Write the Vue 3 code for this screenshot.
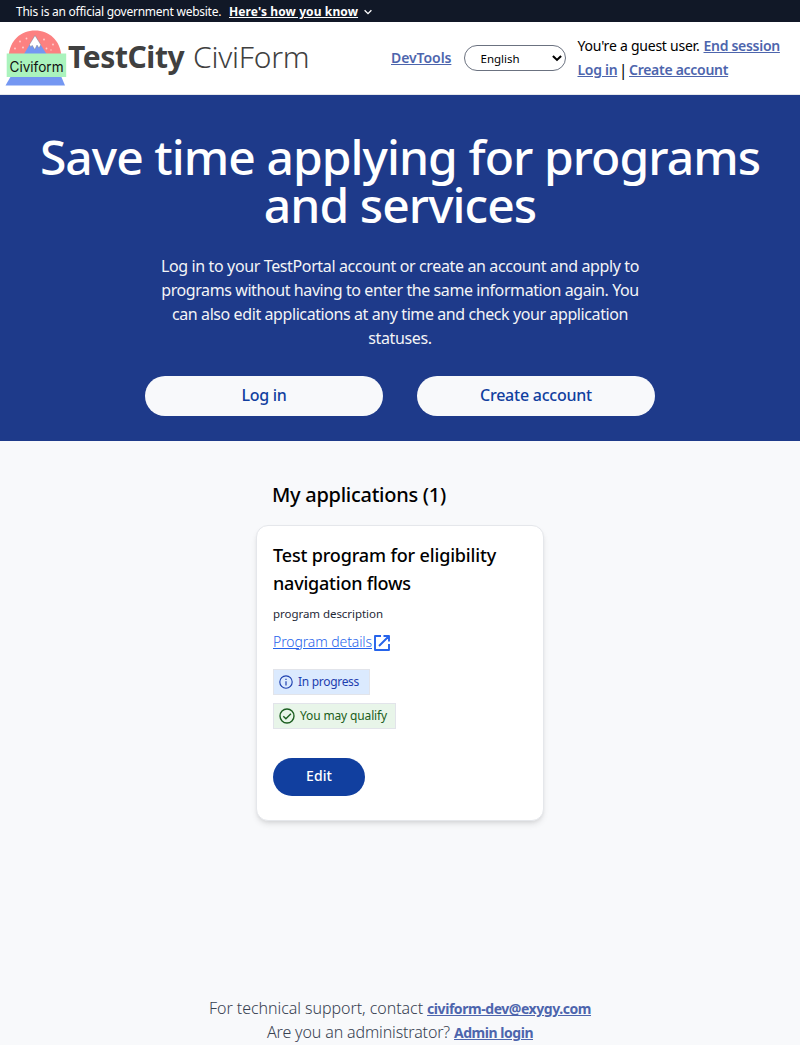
<script setup>
const introLines = [
  { text: 'Log in to your TestPortal account or create an account and apply to', cls: 'l1' },
  { text: 'programs without having to enter the same information again. You', cls: 'l2' },
  { text: 'can also edit applications at any time and check your application', cls: 'l3' },
  { text: 'statuses.', cls: 'l4' }
]
</script>

<template>
  <div class="page">
    <div class="banner">
      <span class="official">This is an official government website.</span>
      <a class="how">Here's how you know</a>
      <svg class="chev" viewBox="0 0 10 10" width="10" height="10"><path d="M1.6 3.2 5 6.6 8.4 3.2" fill="none" stroke="#fff" stroke-width="1.3" /></svg>
    </div>

    <header class="header">
      <div class="brand">
        <svg class="logo" viewBox="0 0 62 56" width="62" height="56">
          <path d="M2.500 27C3.500 10 15 .5 29 .5s25.500 9.500 26.500 26.500z" fill="#fc8181" />
          <path d="M18 24 29 5.500 40.500 24z" fill="#7497f2" />
          <path d="M23.500 14.500 29 5.500l5.800 9.300-1.800 3.200-2-3-2.200 4.500-2.600-4.200-1.600 1.700z" fill="#fff" stroke="#777" stroke-width=".4" />
          <g fill="#fed0d0">
            <circle cx="14" cy="11.500" r=".9" /><circle cx="20.500" cy="8.500" r=".9" /><circle cx="9" cy="18.500" r=".9" />
            <circle cx="17" cy="17.500" r=".9" /><circle cx="38" cy="9.500" r=".9" /><circle cx="47" cy="14.500" r=".9" />
            <circle cx="40.500" cy="18.500" r=".9" /><circle cx="45" cy="20" r=".7" />
          </g>
          <path d="M5 46h50l4 9.500H-.5z" fill="#7497f2" />
          <rect x=".7" y="23.500" width="59.500" height="23.500" fill="#aaf3bd" />
          <text class="logo-text" x="3.500" y="41.500" textLength="54" lengthAdjust="spacingAndGlyphs">Civiform</text>
        </svg>
        <span class="city">TestCity</span>
        <span class="civi">CiviForm</span>
      </div>
      <a class="link devtools">DevTools</a>
      <div class="lang">
        <span>English</span>
        <svg viewBox="0 0 10 8" width="10" height="8"><path d="M.9 2 5 5.900 9.100 2" fill="none" stroke="#000" stroke-width="2.100" /></svg>
      </div>
      <div class="account">
        <div class="line"><span class="guest">You're a guest user.</span><a class="link end">End session</a></div>
        <div class="line"><a class="link login">Log in</a><span class="bar">|</span><a class="link create">Create account</a></div>
      </div>
    </header>

    <section class="hero">
      <h1>Save time applying for programs and services</h1>
      <p class="intro"><span v-for="l in introLines" :key="l.cls" :class="l.cls">{{ l.text }}</span></p>
      <div class="actions">
        <button class="b-login">Log in</button>
        <button class="b-create">Create account</button>
      </div>
    </section>

    <main class="main">
      <h2>My applications (1)</h2>
      <article class="card">
        <h3><span>Test program for eligibility</span><span class="h3-two">navigation flows</span></h3>
        <p class="desc">program description</p>
        <a class="details"><span>Program details</span>
          <svg viewBox="0 0 16 16" width="16" height="16"><path d="M7 1H1v14h14V9M9.500 1H15v5.500M15 1 5 11" fill="none" stroke="#2563eb" stroke-width="1.900" stroke-linejoin="round" /></svg>
        </a>
        <div class="tag progress">
          <svg viewBox="0 0 14 14" width="14" height="14"><circle cx="7" cy="7" r="6.200" fill="none" stroke="#1e40af" stroke-width="1.150" /><path d="M7 6.200v4.200M7 3.700V5" stroke="#1e40af" stroke-width="1.200" /></svg>
          <span>In progress</span>
        </div>
        <div class="tag qualify">
          <svg viewBox="0 0 16 16" width="16" height="16"><circle cx="8" cy="8" r="7" fill="none" stroke="#1b5e20" stroke-width="1.400" /><path d="m4.300 8.200 2.600 2.600 5-5" fill="none" stroke="#1b5e20" stroke-width="1.400" /></svg>
          <span>You may qualify</span>
        </div>
        <button class="edit">Edit</button>
      </article>
    </main>

    <footer class="footer">
      <div class="f-line"><span class="support">For technical support, contact</span><a class="link mail">civiform-dev@exygy.com</a></div>
      <div class="f-line"><span class="ask">Are you an administrator?</span><a class="link admin">Admin login</a></div>
    </footer>
  </div>
</template>

<style>
body { background: #f8f9fb; }
</style>

<style scoped>
.page { height: 1045px; overflow: hidden; display: flex; flex-direction: column; font-family: "Noto Sans", sans-serif; background: #f8f9fb; color: #000; white-space: nowrap; }
h1, h2, h3, p { margin: 0; font-weight: 500; }
button { font-family: inherit; border: 0; padding: 0; font-weight: 500; }

.banner { height: 22px; display: flex; align-items: center; padding: 0 16px; background: #111827; color: #fff; font-size: 12px; line-height: 20px; }
.official, .how { padding-top: 2px; }
.official { width: 213px; letter-spacing: -.25px; }
.how { width: 129px; font-weight: 700; letter-spacing: .11px; text-decoration: underline; }
.chev { margin: 2px 0 0 5px; }

.header { box-sizing: border-box; height: 73px; display: flex; align-items: center; background: #fff; border-bottom: 1px solid #e5e7eb; }
.brand { width: 385px; padding-left: 6px; display: flex; align-items: center; font-size: 30px; line-height: 38px; color: #404040; }
.logo { flex: none; overflow: visible; }
.logo-text { font: 14px Inter, sans-serif; fill: #111; }
.city, .civi { padding-bottom: 2px; }
.city { width: 125px; font-weight: 700; letter-spacing: -.42px; }
.civi { font-weight: 300; letter-spacing: -.24px; }
.link { color: #4d65ad; font-size: 14px; font-weight: 600; text-decoration: underline; }
.devtools { width: 73px; padding-bottom: 2px; letter-spacing: -.07px; }
.lang { box-sizing: border-box; width: 102px; height: 26px; display: flex; align-items: center; justify-content: space-between; padding: 0 3px 0 15.5px; border: 1px solid #6b7280; border-radius: 13px; font-size: 11.5px; line-height: 23px; background: #fff; }
.account { margin-left: 11.500px; font-size: 14px; }
.line { display: flex; height: 24px; line-height: 24px; }
.guest { width: 126px; letter-spacing: -.24px; }
.end { letter-spacing: -.29px; }
.login { width: 40px; letter-spacing: -.3px; }
.bar { width: 11.500px; text-align: center; font-size: 16px; }
.create { letter-spacing: -.28px; }

.hero { box-sizing: border-box; height: 346px; padding-top: 38px; display: flex; flex-direction: column; align-items: center; background: #1e3a8a; color: #fff; }
h1 { width: 760px; text-align: center; white-space: normal; font-size: 48px; line-height: 48px; letter-spacing: -.95px; }
.intro { margin-top: 25px; display: flex; flex-direction: column; align-items: center; font-size: 16px; line-height: 24px; font-weight: 400; color: #f3f4f6; }
.l1 { letter-spacing: -.37px; }
.l2 { letter-spacing: -.41px; }
.l3 { letter-spacing: -.41px; }
.l4 { letter-spacing: -.37px; }
.actions { margin-top: 26px; display: flex; gap: 34px; }
.actions button { width: 238px; height: 40px; border-radius: 20px; background: #f8f9fb; color: #113f9f; font-size: 16px; line-height: 38px; padding-bottom: 2px; }
.b-login { letter-spacing: -.29px; }
.b-create { letter-spacing: -.23px; }

.main { width: 288px; margin: 0 auto; padding-top: 40px; }
h2 { padding-left: 16px; font-size: 20px; line-height: 28px; letter-spacing: -.27px; }
.card { box-sizing: border-box; height: 296px; margin-top: 16px; padding: 15px 16px; display: flex; flex-direction: column; align-items: flex-start; background: #fff; border: 1px solid #e5e7eb; border-radius: 12px; box-shadow: 0 4px 6px -1px rgb(0 0 0 / .1), 0 2px 4px -2px rgb(0 0 0 / .1); }
h3 { display: flex; flex-direction: column; font-size: 18px; line-height: 28px; letter-spacing: -.15px; }
.h3-two { letter-spacing: -.22px; }
.desc { margin-top: 7px; font-size: 11.500px; line-height: 20px; font-weight: 400; letter-spacing: -.05px; color: #1f2937; }
.details { margin-top: 8px; height: 20px; display: flex; align-items: center; gap: 2px; color: #2563eb; font-size: 14px; line-height: 20px; font-weight: 300; letter-spacing: -.1px; }
.details span { width: 99px; text-decoration: underline; }
.details svg { margin-top: 2px; }
.tag { box-sizing: border-box; height: 26px; display: flex; align-items: center; border: 1px solid #e2e4ea; padding: 0 0 0 5px; font-size: 12px; line-height: 24px; }
.progress { width: 97px; margin-top: 17px; gap: 5px; background: #dbeafe; color: #1e40af; letter-spacing: -.3px; }
.qualify { width: 123px; margin-top: 8px; gap: 5px; background: #e8f5e9; color: #1b5e20; letter-spacing: -.14px; }
.edit { width: 92px; height: 38px; margin-top: 29px; border-radius: 19px; background: #113f9f; color: #fff; font-size: 14px; line-height: 36px; padding-bottom: 2px; letter-spacing: .1px; }

.footer { margin-top: auto; padding-bottom: 1px; display: flex; flex-direction: column; align-items: center; font-size: 16px; font-weight: 300; color: #374151; }
.f-line { display: flex; gap: 4px; height: 24px; line-height: 24px; }
.f-line .link { padding-top: 1px; line-height: 23px; }
.support { letter-spacing: -.05px; }
.mail { font-weight: 700; letter-spacing: -.44px; }
.ask { letter-spacing: -.14px; }
.admin { font-weight: 700; letter-spacing: -.47px; }
</style>
